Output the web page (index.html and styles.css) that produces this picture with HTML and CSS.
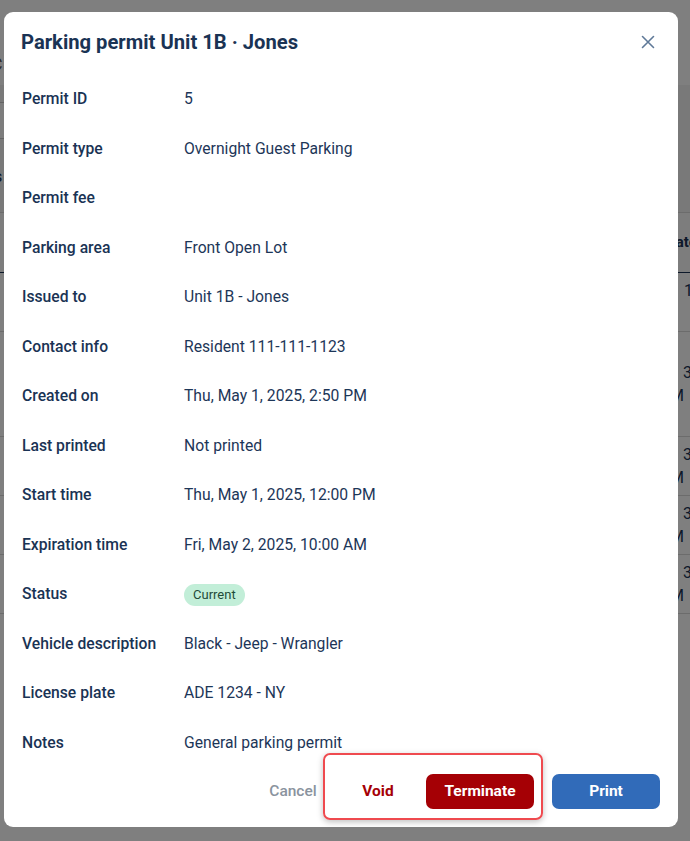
FILE: index.html
```html
<!DOCTYPE html>
<html lang="en">
<head>
<meta charset="utf-8">
<title>Parking permit</title>
<link rel="stylesheet" href="styles.css">
</head>
<body>
<div class="page">
  <div class="topbar"><span class="crumb">C</span></div>
  <div class="band">
    <div class="field"></div>
    <span class="tab">s</span>
  </div>
  <div class="table">
    <div class="thead"><span class="cell"></span><span class="cell right"><span class="l1">Date</span></span></div>
    <div class="trow r1"><span class="cell"></span><span class="cell right"><span class="l1">1</span></span></div>
    <div class="trow r2"><span class="cell"></span><span class="cell right"><span class="l1">3</span><span class="l2">PM</span></span></div>
    <div class="trow r3"><span class="cell"></span><span class="cell right"><span class="l1">3</span><span class="l2">PM</span></span></div>
    <div class="trow r3"><span class="cell"></span><span class="cell right"><span class="l1">3</span><span class="l2">PM</span></span></div>
    <div class="trow r3"><span class="cell"></span><span class="cell right"><span class="l1">3</span><span class="l2">PM</span></span></div>
  </div>
</div>
<div class="overlay"></div>
<div class="modal" role="dialog">
  <div class="modal-head">
    <h2 class="title">Parking permit Unit 1B · Jones</h2>
    <button class="close" aria-label="Close">
      <svg width="14" height="14" viewBox="0 0 14 14"><path d="M1.5 1.5 L12.5 12.5 M12.5 1.5 L1.5 12.5" stroke="#5f7998" stroke-width="1.6" stroke-linecap="round" fill="none"/></svg>
    </button>
  </div>
  <dl class="details">
    <dt>Permit ID</dt><dd>5</dd>
    <dt>Permit type</dt><dd>Overnight Guest Parking</dd>
    <dt>Permit fee</dt><dd></dd>
    <dt>Parking area</dt><dd>Front Open Lot</dd>
    <dt>Issued to</dt><dd>Unit 1B - Jones</dd>
    <dt>Contact info</dt><dd>Resident 111-111-1123</dd>
    <dt>Created on</dt><dd>Thu, May 1, 2025, 2:50 PM</dd>
    <dt>Last printed</dt><dd>Not printed</dd>
    <dt>Start time</dt><dd>Thu, May 1, 2025, 12:00 PM</dd>
    <dt>Expiration time</dt><dd>Fri, May 2, 2025, 10:00 AM</dd>
    <dt>Status</dt><dd><span class="badge">Current</span></dd>
    <dt>Vehicle description</dt><dd>Black - Jeep - Wrangler</dd>
    <dt>License plate</dt><dd>ADE 1234 - NY</dd>
    <dt>Notes</dt><dd>General parking permit</dd>
  </dl>
  <div class="footer">
    <button class="btn btn-cancel">Cancel</button>
    <div class="danger-group">
      <button class="btn btn-void">Void</button>
      <button class="btn btn-terminate">Terminate</button>
    </div>
    <button class="btn btn-print">Print</button>
  </div>
</div>
</body>
</html>
```
FILE: styles.css
```css
* { box-sizing: border-box; }
html, body { margin: 0; padding: 0; }
body {
  font-family: Roboto, "Liberation Sans", Arial, sans-serif;
  background: #ffffff;
  width: 690px;
  height: 841px;
  overflow: hidden;
  color: #1a3354;
}

/* background application page (dimmed by the overlay) */
.page { width: 690px; height: 841px; background: #fff; }
.topbar { height: 85px; padding: 54px 0 0 0; }
.crumb { display: block; font-size: 16px; line-height: 22px; color: #555; margin-left: -8px; }
.band { height: 128px; background: #f3f3f3; padding-top: 17px; border-bottom: 1px solid #d8d8d8; }
.field { height: 37px; width: 30px; border-top: 1px solid #c9c9c9; border-bottom: 1px solid #c9c9c9; background: #fbfbfb; }
.tab { display: block; margin-top: 28px; font-size: 16px; line-height: 20px; color: #1a3354; margin-left: -6px; }
.table { background: #fff; }
.thead, .trow { display: flex; justify-content: space-between; border-bottom: 1px solid #d9d9d9; }
.thead { height: 60px; align-items: center; font-weight: 700; font-size: 15px; background: #fafafa; border-bottom: 1px solid #1a3354; }
.trow { font-size: 16px; align-items: center; color: #1a3354; }
.r1 { height: 59px; align-items: flex-start; padding-top: 6px; }
.r2 { height: 105px; }
.r3 { height: 59px; }
.cell.right { width: 19px; flex: none; display: flex; flex-direction: column; line-height: 23px; }
.l1 { padding-left: 12px; white-space: nowrap; }
.l2 { margin-left: -11px; white-space: nowrap; }
.thead .l1 { padding-left: 0; margin-left: -5px; }
.r1 .l1 { padding-left: 13px; color: #1a3354; }

.overlay { position: fixed; inset: 0; background: rgba(0, 0, 0, 0.5); }

/* modal */
.modal {
  position: fixed;
  left: 4px;
  top: 12px;
  width: 674px;
  height: 815px;
  background: #fff;
  border-radius: 9px;
  padding: 16px 18px 19px 18px;
  display: flex;
  flex-direction: column;
}
.modal-head { display: flex; align-items: center; justify-content: space-between; height: 28px; }
.title { margin: 0 0 0 -1px; font-size: 20.2px; line-height: 28px; font-weight: 700; color: #1a3354; }
.close { border: 0; background: none; padding: 0; width: 24px; height: 24px; display: flex; align-items: center; justify-content: center; cursor: pointer; }

.details {
  margin: 18.25px 0 0 0;
  display: grid;
  grid-template-columns: 162px 1fr;
  grid-auto-rows: 49.5px;
  align-items: center;
  font-size: 15.7px;
  line-height: 24px;
}
.details dt { font-weight: 500; color: #1a3354; }
.details dd { margin: 0; color: #1d3658; }
.badge {
  display: inline-block;
  background: #c2eed8;
  color: #1f4b38;
  font-size: 13px;
  line-height: 22px;
  height: 22px;
  padding: 0 9px;
  border-radius: 11px;
  vertical-align: middle;
}

.footer { margin-top: 6.25px; display: flex; justify-content: flex-end; align-items: center; }
.btn {
  font-family: inherit;
  font-size: 15.5px;
  height: 35px;
  border: 0;
  border-radius: 7px;
  background: none;
  cursor: pointer;
  padding: 0;
}
.btn-cancel { color: #8a939e; font-weight: 500; width: 80px; margin-right: 13px; }
.danger-group { position: relative; display: flex; gap: 16px; margin-right: 18px; }
.danger-group::after {
  content: "";
  position: absolute;
  left: -23px;
  right: -9px;
  top: -21px;
  bottom: -11px;
  border: 2px solid #ef4a4f;
  border-radius: 7px;
  box-shadow: 0 2px 6px rgba(0, 0, 0, 0.25);
  pointer-events: none;
}
.btn-void { color: #a50005; font-weight: 700; width: 64px; }
.btn-terminate { background: #a50005; color: #fff; font-weight: 700; width: 108px; }
.btn-print { background: #316bb9; color: #fff; font-weight: 700; width: 108px; }
```
